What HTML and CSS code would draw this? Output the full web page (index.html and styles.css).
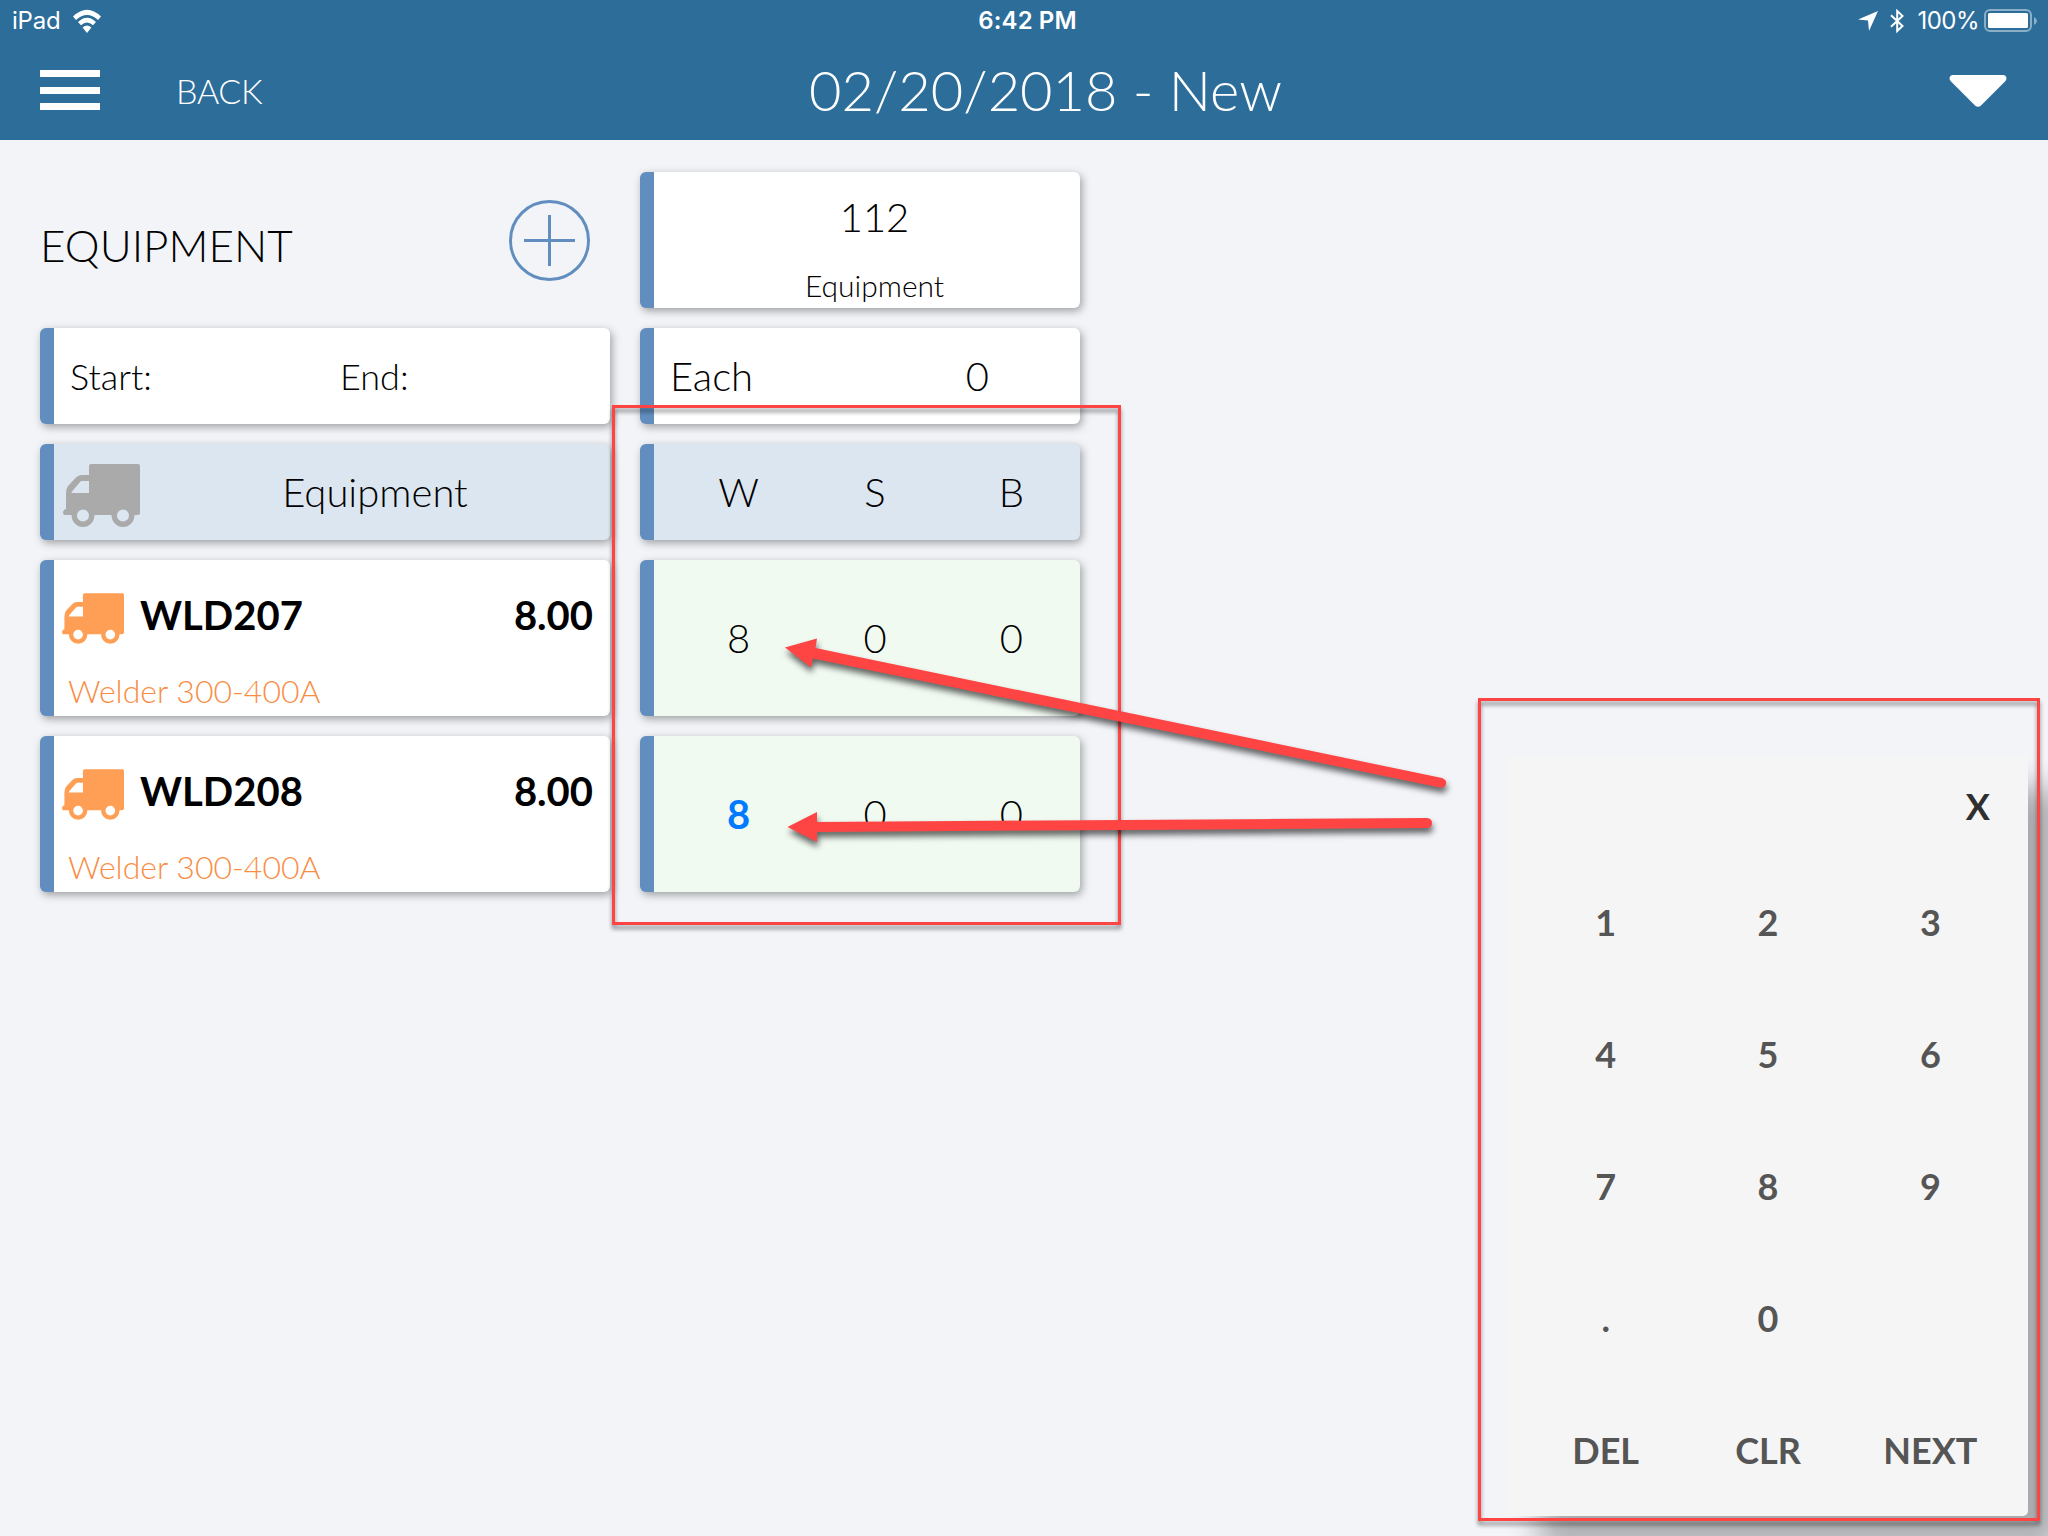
FILE: index.html
```
<!DOCTYPE html>
<html lang="en">
<head>
<meta charset="utf-8">
<title>02/20/2018 - New</title>
<link rel="stylesheet" href="styles.css">
</head>
<body>
<svg class="defs" width="0" height="0" aria-hidden="true">
  <symbol id="truck" viewBox="0 0 77 63">
    <path fill-rule="evenodd" d="M28 0H75Q77 0 77 2V49Q77 51 74 51H71.500A11.500 12 0 0 1 48.500 51H31.500A11.500 12 0 0 1 8.500 51H2Q0 51 0 48.500Q0 46 3 45V29Q3 25 5 22L13 13.500Q15 11 18.500 11H26V2Q26 0 28 0ZM26 17H19Q18 17 17 18L9 27.500Q8.500 28 8.500 29H26ZM20 45.500A6 6 0 1 0 20 57.500A6 6 0 1 0 20 45.500ZM60 45.500A6 6 0 1 0 60 57.500A6 6 0 1 0 60 45.500Z"/>
  </symbol>
</svg>
<div class="screen">
  <header class="header">
    <div class="status">
      <div class="status-side">
        <span class="device">iPad</span>
        <svg class="wifi" viewBox="0 0 28 24" width="28" height="24"><path d="M0 7.500Q14-6 28 7.500L25 11Q14 1 3 11ZM5 13Q14 4.500 23 13L20 16.200Q14 11 8 16.200ZM9.600 18.400Q14 14.500 18.400 18.400L14 24Z"/></svg>
      </div>
      <span class="clock">6:42 PM</span>
      <div class="status-side status-right">
        <svg class="location" viewBox="0 0 20 20" width="20" height="20"><path d="M20 0L11 20L10 9.500L0 8.500Z"/></svg>
        <svg class="bluetooth" viewBox="0 0 14 24" width="14" height="24"><path d="M1 6.200L12.500 17L7.200 22V2L12.500 7L1 17.800"/></svg>
        <span class="percent">100%</span>
        <svg class="battery" viewBox="0 0 54 24" width="54" height="24"><rect class="shell" x="1" y="1" width="46" height="21" rx="5"/><rect x="4" y="4" width="40" height="15" rx="1.500"/><path class="cap" d="M50 8Q53 9.500 53 12Q53 14.500 50 16Z"/></svg>
      </div>
    </div>
    <nav class="nav">
      <div class="nav-left">
        <div class="menu"><i></i><i></i><i></i></div>
        <span class="back">BACK</span>
      </div>
      <h1 class="title">02/20/2018 - New</h1>
      <svg class="caret" viewBox="0 0 58 34" width="58" height="34"><path d="M4 1H54Q57 1 57.500 4Q57.500 6 56 7.500L32 31.500Q29 34 26 31.500L2 7.500Q.5 6 .5 4Q1 1 4 1Z"/></svg>
    </nav>
  </header>

  <main class="sheet">
    <section class="col col-left">
      <div class="section-head">
        <h2>EQUIPMENT</h2>
        <svg class="add" viewBox="0 0 82 82" width="82" height="82"><circle cx="40.500" cy="40.500" r="39"/><path d="M40.500 15V66M15 40.500H66"/></svg>
      </div>
      <div class="card short period"><span>Start:</span><span>End:</span></div>
      <div class="card short tinted group"><svg class="truck-big"><use href="#truck"/></svg><span>Equipment</span></div>
      <div class="card tall item">
        <div class="item-main"><svg class="truck"><use href="#truck"/></svg><b>WLD207</b><b class="hours">8.00</b></div>
        <span class="desc">Welder 300-400A</span>
      </div>
      <div class="card tall item">
        <div class="item-main"><svg class="truck"><use href="#truck"/></svg><b>WLD208</b><b class="hours">8.00</b></div>
        <span class="desc">Welder 300-400A</span>
      </div>
    </section>
    <section class="col col-right">
      <div class="card code"><span>112</span><small>Equipment</small></div>
      <div class="card short each"><span>Each</span><span>0</span></div>
      <div class="card short tinted cells"><span>W</span><span>S</span><span>B</span></div>
      <div class="card tall green cells"><span>8</span><span>0</span><span>0</span></div>
      <div class="card tall green cells"><span class="active">8</span><span>0</span><span>0</span></div>
    </section>
  </main>

  <aside class="keypad">
    <div class="close">X</div>
    <div class="keys">
      <span>1</span><span>2</span><span>3</span>
      <span>4</span><span>5</span><span>6</span>
      <span>7</span><span>8</span><span>9</span>
      <span>.</span><span>0</span><span></span>
      <span>DEL</span><span>CLR</span><span>NEXT</span>
    </div>
  </aside>

  <svg class="marks" viewBox="0 0 2048 1536" width="2048" height="1536">
    <rect class="frame" x="613.500" y="406.500" width="506" height="517"/>
    <rect class="frame" x="1479.500" y="699.500" width="559" height="820"/>
    <g class="arrow">
      <path d="M785 647.500L817 638.500L815.500 648L1442 778Q1447 780 1446 784Q1445 788 1440 787.500L813 658.500L811 667.500Z"/>
      <path d="M787.500 827L817 812V822L1427 818Q1432 818.500 1432 823Q1432 828 1427 828L817 832V842Z"/>
    </g>
  </svg>
</div>
</body>
</html>
```
FILE: styles.css
```
* { box-sizing: border-box; }

body {
  margin: 0;
  background: #f2f4f8;
  color: #000;
  font-family: Lato, sans-serif;
  font-weight: 300;
}

.defs { position: absolute; }

.screen {
  position: relative;
  width: 2048px;
  height: 1536px;
  overflow: hidden;
}

/* Header */
.header {
  height: 140px;
  background: #2c6d9a;
  color: #fff;
  fill: #fff;
}

.status {
  display: grid;
  grid-template-columns: 1fr auto 1fr;
  align-items: center;
  height: 40px;
  padding: 1px 10px 0 12px;
  font: 400 24px/40px Inter, sans-serif;
}

.status-side { display: flex; align-items: center; }
.status-right { justify-content: flex-end; }
.device { margin-right: 12px; letter-spacing: -.2px; }
.clock { font-weight: 600; padding-left: 5px; letter-spacing: .1px; }
.location { margin-right: 12px; }
.bluetooth { margin-right: 13px; fill: none; stroke: #fff; stroke-width: 2; }
.percent { margin-right: 5px; letter-spacing: -.5px; }
.shell { fill: none; stroke: #fff; stroke-width: 2; opacity: .45; }
.cap { opacity: .45; }

.nav {
  display: grid;
  grid-template-columns: 1fr auto 1fr;
  align-items: center;
  height: 100px;
  padding: 0 41px 0 40px;
}

.nav-left { display: flex; align-items: center; }

.menu {
  display: flex;
  flex-direction: column;
  justify-content: space-between;
  width: 60px;
  height: 40px;
  margin-right: 76px;
}

.menu i { height: 7px; background: #fff; }

.back { font-size: 34px; letter-spacing: -.3px; line-height: 40px; padding-top: 2px; }

.title {
  margin: 0;
  padding-left: 44px;
  font-size: 56px;
  font-weight: 300;
  line-height: 100px;
}

.caret { justify-self: end; margin-top: 2px; }

/* Sheet */
.sheet { display: flex; gap: 30px; padding: 32px 40px; }
.col { display: flex; flex-direction: column; gap: 20px; }
.col-left { width: 570px; }
.col-right { width: 440px; }

.section-head {
  display: flex;
  align-items: center;
  justify-content: space-between;
  height: 136px;
  padding-right: 19px;
}

.section-head h2 {
  margin: 0;
  padding-top: 9px;
  font-size: 44px;
  font-weight: 300;
}

.add { margin-top: 2px; fill: none; stroke: #628ebf; stroke-width: 3; }

.card {
  display: flex;
  border-left: 14px solid #628ebf;
  border-radius: 6px;
  background: #fff;
  box-shadow: 2px 3px 8px rgba(0, 0, 0, .35);
  font-size: 40px;
  line-height: 48px;
}

.short { height: 96px; align-items: center; }
.tall { height: 156px; }
.tinted { background: #dce6f0; }
.green { background: #f0faf1; }

.period { padding-left: 16px; font-size: 36px; }
.period span { width: 271px; }

.group { padding-left: 9px; }
.group span { flex: 1; text-align: center; }
.truck-big { width: 77px; height: 63px; fill: #aaa; margin-top: 7px; }

.item { flex-direction: column; padding: 31px 17px 0 8px; }
.item-main { display: flex; align-items: center; height: 54px; }
.item-main b { font-weight: 700; line-height: 54px; margin-top: -7px; }
.truck { width: 62px; height: 51px; fill: #ff9f55; margin-right: 16px; }
.item-main .hours { margin-left: auto; }
.desc { padding: 22px 0 0 6px; color: #f98d45; font-size: 32px; line-height: 48px; }

.code {
  flex-direction: column;
  align-items: center;
  height: 136px;
  padding: 21px 0 0 15px;
}

.code small { margin-top: 21px; font-size: 30px; line-height: 46px; }

.each { justify-content: space-between; padding: 0 91px 0 16px; }

.cells { align-items: center; padding: 0 .5px 0 16.5px; }
.cells span { flex: 1; text-align: center; }
.cells .active { color: #007aff; font-weight: 700; }

/* Keypad floats over the sheet */
.keypad {
  position: absolute;
  left: 1507px;
  top: 756px;
  width: 521px;
  height: 760px;
  padding: 0 16.5px 0 17.5px;
  border-radius: 5px;
  background: #f5f5f5;
  box-shadow: 32px 32px 30px rgba(0, 0, 0, .3);
  color: #555;
  font-size: 36px;
  font-weight: 700;
}

.close {
  height: 100px;
  padding-right: 21.5px;
  color: #2f2f2f;
  line-height: 100px;
  text-align: right;
}

.keys { display: grid; grid-template-columns: repeat(3, 1fr); grid-auto-rows: 132px; }
.keys span { line-height: 132px; text-align: center; }

/* Callout marks drawn over the screen */
.marks { position: absolute; left: 0; top: 0; }
.frame { fill: none; stroke: #ff4444; stroke-width: 3; filter: drop-shadow(0 4px 2px rgba(0, 0, 0, .45)); }
.arrow { fill: #ff4444; filter: drop-shadow(1px 5px 3px rgba(0, 0, 0, .6)); }
```
